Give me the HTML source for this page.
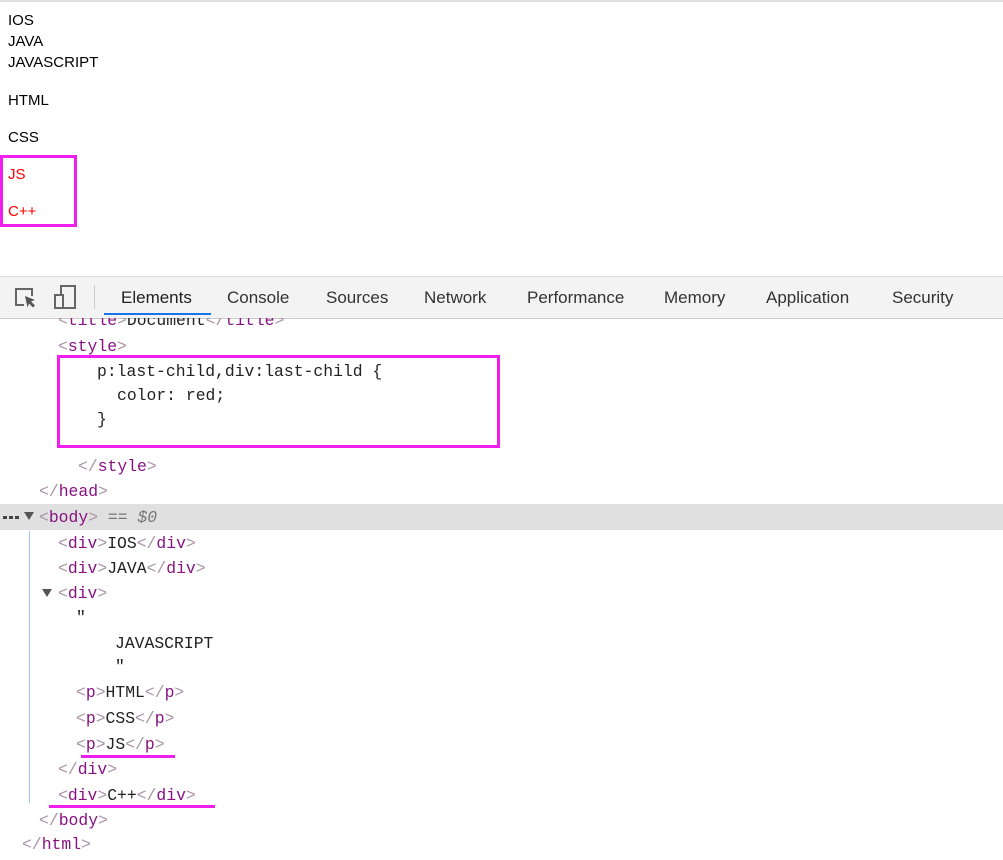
<!DOCTYPE html><html><head><style>
body{margin:0;width:1003px;height:860px;position:relative;background:#fff;overflow:hidden;font-family:"Liberation Sans",sans-serif}
.t{position:absolute;left:8px;font-size:15px;color:#000;line-height:18px}
.r{color:#f00}
.c{position:absolute;font-family:"Liberation Mono",monospace;font-size:16.4px;line-height:20px;color:#222;white-space:pre}
.g{color:#a894a6}.p{color:#881280}
.tab{position:absolute;top:288px;font-size:17px;color:#333}
</style></head><body>
<div style="position:absolute;left:0;top:0;width:1003px;height:2px;background:#e0e0e0"></div>
<div class="t" style="top:12px">IOS</div>
<div class="t" style="top:33px">JAVA</div>
<div class="t" style="top:54px">JAVASCRIPT</div>
<div class="t" style="top:92px">HTML</div>
<div class="t" style="top:129px">CSS</div>
<div class="t r" style="top:166px">JS</div>
<div class="t r" style="top:203px">C++</div>
<div style="position:absolute;left:0;top:155px;width:71px;height:66px;border:3px solid #f01ff0"></div>

<div style="position:absolute;left:0;top:276px;width:1003px;height:41px;background:#f3f3f3;border-top:1px solid #ddd;border-bottom:1px solid #ccc"></div>
<svg style="position:absolute;left:14px;top:286px" width="24" height="24" viewBox="0 0 24 24"><path d="M10 19H2V3h16v7" fill="none" stroke="#666" stroke-width="2"/><path d="M11 10l10 4-4 1.5 4 4-2 2-4-4-1.5 4z" fill="#555"/></svg>
<svg style="position:absolute;left:53px;top:285px" width="24" height="26" viewBox="0 0 24 26"><rect x="8" y="1" width="14" height="22" fill="none" stroke="#666" stroke-width="2"/><rect x="2" y="10" width="8" height="13" fill="#f3f3f3" stroke="#666" stroke-width="2"/></svg>
<div style="position:absolute;left:94px;top:285px;width:1px;height:24px;background:#ccc"></div>
<div class="tab" style="left:121px;color:#222">Elements</div>
<div style="position:absolute;left:104px;top:313px;width:107px;height:2px;background:#1a73e8"></div>
<div class="tab" style="left:227px">Console</div>
<div class="tab" style="left:326px">Sources</div>
<div class="tab" style="left:424px">Network</div>
<div class="tab" style="left:527px">Performance</div>
<div class="tab" style="left:664px">Memory</div>
<div class="tab" style="left:766px">Application</div>
<div class="tab" style="left:892px">Security</div>

<div style="position:absolute;left:0;top:318px;width:1003px;height:542px;overflow:hidden">
<div class="c" style="left:58px;top:-7px"><span class="g">&lt;</span><span class="p">title</span><span class="g">&gt;</span>Document<span class="g">&lt;/</span><span class="p">title</span><span class="g">&gt;</span></div>
</div>
<div class="c" style="left:58px;top:337px"><span class="g">&lt;</span><span class="p">style</span><span class="g">&gt;</span></div>
<div class="c" style="left:97px;top:362px">p:last-child,div:last-child {</div>
<div class="c" style="left:117px;top:386px">color: red;</div>
<div class="c" style="left:97px;top:410px">}</div>
<div style="position:absolute;left:57px;top:355px;width:437px;height:87px;border:3px solid #f01ff0"></div>
<div class="c" style="left:78px;top:457px"><span class="g">&lt;/</span><span class="p">style</span><span class="g">&gt;</span></div>
<div class="c" style="left:39px;top:482px"><span class="g">&lt;/</span><span class="p">head</span><span class="g">&gt;</span></div>
<div style="position:absolute;left:0;top:504px;width:1003px;height:26px;background:#e0e0e0"></div>
<div style="position:absolute;left:3px;top:516px;width:4px;height:3px;background:#444;box-shadow:6px 0 #444,12px 0 #444"></div>
<div style="position:absolute;left:24px;top:512px;width:0;height:0;border-left:5px solid transparent;border-right:5px solid transparent;border-top:8px solid #555"></div>
<div class="c" style="left:39px;top:508px"><span class="g">&lt;</span><span class="p">body</span><span class="g">&gt;</span> <span style="color:#777;font-style:italic">== $0</span></div>
<div style="position:absolute;left:29px;top:531px;width:1px;height:272px;background:#a8c0ee"></div>
<div class="c" style="left:58px;top:534px"><span class="g">&lt;</span><span class="p">div</span><span class="g">&gt;</span>IOS<span class="g">&lt;/</span><span class="p">div</span><span class="g">&gt;</span></div>
<div class="c" style="left:58px;top:559px"><span class="g">&lt;</span><span class="p">div</span><span class="g">&gt;</span>JAVA<span class="g">&lt;/</span><span class="p">div</span><span class="g">&gt;</span></div>
<div style="position:absolute;left:42px;top:589px;width:0;height:0;border-left:5px solid transparent;border-right:5px solid transparent;border-top:8px solid #555"></div>
<div class="c" style="left:58px;top:584px"><span class="g">&lt;</span><span class="p">div</span><span class="g">&gt;</span></div>
<div class="c" style="left:76px;top:608px">"</div>
<div class="c" style="left:115px;top:634px">JAVASCRIPT</div>
<div class="c" style="left:115px;top:657px">"</div>
<div class="c" style="left:76px;top:683px"><span class="g">&lt;</span><span class="p">p</span><span class="g">&gt;</span>HTML<span class="g">&lt;/</span><span class="p">p</span><span class="g">&gt;</span></div>
<div class="c" style="left:76px;top:709px"><span class="g">&lt;</span><span class="p">p</span><span class="g">&gt;</span>CSS<span class="g">&lt;/</span><span class="p">p</span><span class="g">&gt;</span></div>
<div class="c" style="left:76px;top:735px"><span class="g">&lt;</span><span class="p">p</span><span class="g">&gt;</span>JS<span class="g">&lt;/</span><span class="p">p</span><span class="g">&gt;</span></div>
<div style="position:absolute;left:81px;top:755px;width:94px;height:3px;background:#f01ff0"></div>
<div class="c" style="left:58px;top:760px"><span class="g">&lt;/</span><span class="p">div</span><span class="g">&gt;</span></div>
<div class="c" style="left:58px;top:786px"><span class="g">&lt;</span><span class="p">div</span><span class="g">&gt;</span>C++<span class="g">&lt;/</span><span class="p">div</span><span class="g">&gt;</span></div>
<div style="position:absolute;left:49px;top:805px;width:166px;height:3px;background:#f01ff0"></div>
<div class="c" style="left:39px;top:811px"><span class="g">&lt;/</span><span class="p">body</span><span class="g">&gt;</span></div>
<div class="c" style="left:22px;top:835px"><span class="g">&lt;/</span><span class="p">html</span><span class="g">&gt;</span></div>
</body></html>
